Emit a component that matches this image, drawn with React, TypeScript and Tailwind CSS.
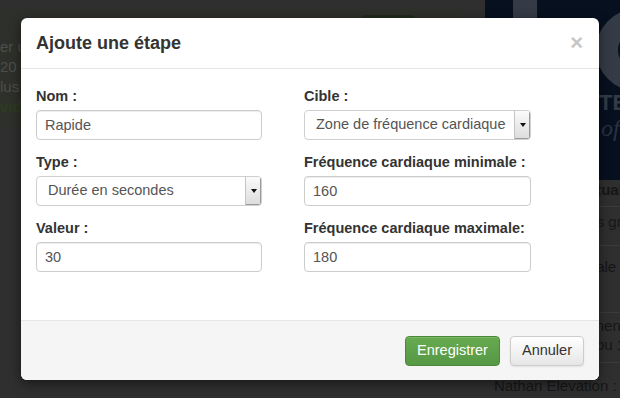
import React from "react";

const FONT = { fontFamily: '"Liberation Sans", Arial, Helvetica, sans-serif' };

function TextField({ value }: { value: string }) {
  return (
    <input
      readOnly
      value={value}
      className="h-[30px] w-full rounded-[4px] border border-[#cccccc] bg-white px-[8px] text-[14.5px] text-[#555555] shadow-[inset_0_1px_1px_rgba(0,0,0,0.075)] outline-none"
    />
  );
}

function SelectField({ value }: { value: string }) {
  return (
    <div className="flex h-[30px] w-full items-stretch overflow-hidden rounded-[4px] border border-[#cfcfcf] bg-white">
      <div className="flex flex-1 items-center pl-[11px] text-[14.5px] whitespace-nowrap text-[#555555]">{value}</div>
      <div className="flex w-[16px] items-center justify-center border-l border-[#c4c4c4] bg-gradient-to-b from-[#fbfbfb] to-[#dcdcdc] shadow-[inset_-1px_-1px_0_#9a9a9a]">
        <svg width="6" height="4" viewBox="0 0 6 4">
          <path d="M0 0h6L3 4z" fill="#111" />
        </svg>
      </div>
    </div>
  );
}

function Field({ label, children }: { label: string; children: React.ReactNode }) {
  return (
    <div className="flex flex-col gap-[4px]">
      <label className="h-[20px] text-[14.5px] leading-[20px] font-bold whitespace-nowrap text-[#333333]">{label}</label>
      {children}
    </div>
  );
}

export default function App() {
  return (
    <div style={FONT} className="relative flex h-[398px] w-[620px] overflow-hidden bg-[#2f2f2f]">
      {/* page behind the overlay */}
      <div className="w-[485px] pt-[7px]">
        <div className="relative h-[122px] w-[465px] rounded-r-[5px] bg-[#2e302b] pt-[30px]">
          <div className="absolute left-[362px] top-[8px] h-[20px] w-[53px] rounded-[4px] bg-[#212b1c]" />
          <div className="flex flex-col text-[15px] leading-[20px] whitespace-nowrap text-[#4c4e4a]">
            <span>er une sortie</span>
            <span>20 min</span>
            <span>lus</span>
            <span className="font-bold text-[#2b3d1f]">vidéo</span>
          </div>
        </div>
      </div>
      <div className="flex w-[135px] flex-col">
        <div className="flex h-[180px] flex-col overflow-hidden bg-[#07101f]">
          <svg width="135" height="88" viewBox="0 0 135 88" className="shrink-0">
            <rect x="28" y="-10" width="24" height="92" fill="#353b46" />
            <circle cx="152" cy="50" r="30" fill="none" stroke="#353b46" strokeWidth="22" />
          </svg>
          <span className="pl-[114px] pt-[4px] text-[22px] leading-[22px] font-bold text-[#353b46]">TE</span>
          <span
            className="pl-[116px] pt-[2px] text-[24px] italic leading-[24px] text-[#2a3244]"
            style={{ fontFamily: '"Liberation Serif", serif' }}
          >
            offert
          </span>
        </div>
        <div className="flex flex-col bg-[#2f2f2f] text-[15px] whitespace-nowrap text-[#161616]">
          <div className="border-b border-[#3b3b3b] pl-[92px] pb-[6px] leading-[20px] font-bold">Actualités</div>
          <div className="border-b border-[#3b3b3b] pl-[100px] pt-[4px] pb-[12px] leading-[22px]">les groupes</div>
          <div className="border-b border-[#3b3b3b] pl-[92px] pt-[11px] pb-[35px] leading-[20px]">locale</div>
          <div className="border-b border-[#3b3b3b] pt-[3px] pb-[8px] leading-[19px]">
            <div className="pl-[62px]">s'entraînent</div>
            <div className="pl-[111px]">ou 10 km</div>
          </div>
          <div className="pl-[9px] pt-[13px] leading-[20px]">Nathan Elevation : Sortie</div>
        </div>
      </div>

      {/* modal */}
      <div className="absolute left-[21px] top-[18px] flex h-[362px] w-[578px] flex-col overflow-hidden rounded-[6px] bg-white shadow-[0_3px_12px_rgba(0,0,0,0.5)]">
        <div className="flex h-[51px] items-center justify-between border-b border-[#e5e5e5] pl-[15px] pr-[16px]">
          <h3 className="pt-[1px] text-[18px] font-bold text-[#333333]">Ajoute une étape</h3>
          <span className="text-[22px] leading-none font-bold text-[#c6c6c6]">×</span>
        </div>
        <div className="grid flex-1 grid-cols-[226px_227px] content-start gap-x-[42px] gap-y-[12px] pl-[15px] pt-[17px]">
          <Field label="Nom :">
            <TextField value="Rapide" />
          </Field>
          <Field label="Cible :">
            <SelectField value="Zone de fréquence cardiaque" />
          </Field>
          <Field label="Type :">
            <SelectField value="Durée en secondes" />
          </Field>
          <Field label="Fréquence cardiaque minimale :">
            <TextField value="160" />
          </Field>
          <Field label="Valeur :">
            <TextField value="30" />
          </Field>
          <Field label="Fréquence cardiaque maximale:">
            <TextField value="180" />
          </Field>
        </div>
        <div className="flex h-[60px] items-center justify-end gap-[10px] border-t border-[#e5e5e5] bg-[#f5f5f5] pr-[15px]">
          <button className="h-[30px] w-[95px] rounded-[4px] border border-[#4a8a37] bg-gradient-to-b from-[#67aa50] to-[#569845] text-[14.5px] text-white shadow-[inset_0_1px_0_rgba(255,255,255,0.15)]">
            Enregistrer
          </button>
          <button className="h-[30px] w-[74px] rounded-[4px] border border-[#cccccc] bg-gradient-to-b from-white to-[#e6e6e6] text-[14.5px] text-[#333333] shadow-[0_1px_2px_rgba(0,0,0,0.08)]">
            Annuler
          </button>
        </div>
      </div>
    </div>
  );
}
